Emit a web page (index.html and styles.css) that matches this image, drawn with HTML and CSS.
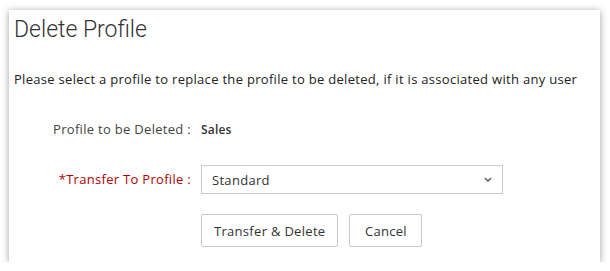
FILE: index.html
```html
<!DOCTYPE html>
<html>
<head>
	<meta charset="utf-8">
	<title>Delete Profile</title>
<link rel="stylesheet" href="styles.css">
</head>
<body>
	<div class="dialog">
		<h1 class="dialog-title">Delete Profile</h1>
		<p class="dialog-note">Please select a profile to replace the profile to be deleted, if it is associated with any user</p>

		<div class="form">
			<div class="label">Profile to be Deleted :</div>
			<div class="value">Sales</div>

			<div class="label required">*Transfer To Profile :</div>
			<div class="select">
				<span>Standard</span>
				<svg class="chevron" width="8" height="5" viewBox="0 0 8 5"><path d="M1 1 L4 4 L7 1" fill="none" stroke="#555" stroke-width="1.4"/></svg>
			</div>

			<div></div>
			<div class="actions">
				<button class="btn">Transfer &amp; Delete</button>
				<button class="btn">Cancel</button>
			</div>
		</div>
	</div>
</body>
</html>
```

FILE: styles.css
```css
* {
	margin: 0;
	padding: 0;
	box-sizing: border-box;
	font-family: "Open Sans", sans-serif;
	letter-spacing: 0.3px;
}

body {
	background: #fff;
	padding: 10px 0 0 9px;
}

.dialog {
	width: 591px;
	height: 252px;
	background: #fff;
	box-shadow: 0 1px 7px rgba(0, 0, 0, 0.38);
	padding: 0 0 0 5px;
	color: #333;
}

.dialog-title {
	font-family: Roboto, sans-serif;
	font-size: 23px;
	font-weight: 300;
	letter-spacing: 0;
	color: #333;
	line-height: 30px;
	padding-top: 5px;
}

.dialog-note {
	font-size: 13px;
	line-height: 16px;
	margin-top: 26px;
	color: #222;
}

.form {
	display: grid;
	grid-template-columns: 177px 302px;
	column-gap: 10px;
	margin-top: 28px;
	font-size: 13px;
}

.label {
	text-align: right;
	color: #444;
	line-height: 29px;
	height: 29px;
}

.value {
	font-weight: 600;
	color: #333;
	line-height: 29px;
	height: 29px;
	font-size: 12px;
	letter-spacing: 0.2px;
}

.required {
	color: #b00000;
	margin-top: 21px;
}

.select {
	margin-top: 21px;
	height: 29px;
	border: 1px solid #ccc;
	display: flex;
	align-items: center;
	justify-content: space-between;
	padding: 0 10px 0 10px;
	color: #333;
}

.actions {
	display: flex;
	gap: 11px;
	margin-top: 20px;
}

.btn {
	height: 33px;
	min-width: 73px;
	padding: 0 12px;
	background: #fff;
	border: 1px solid #c8c8c8;
	border-radius: 2px;
	font-size: 13px;
	color: #333;
}
```
